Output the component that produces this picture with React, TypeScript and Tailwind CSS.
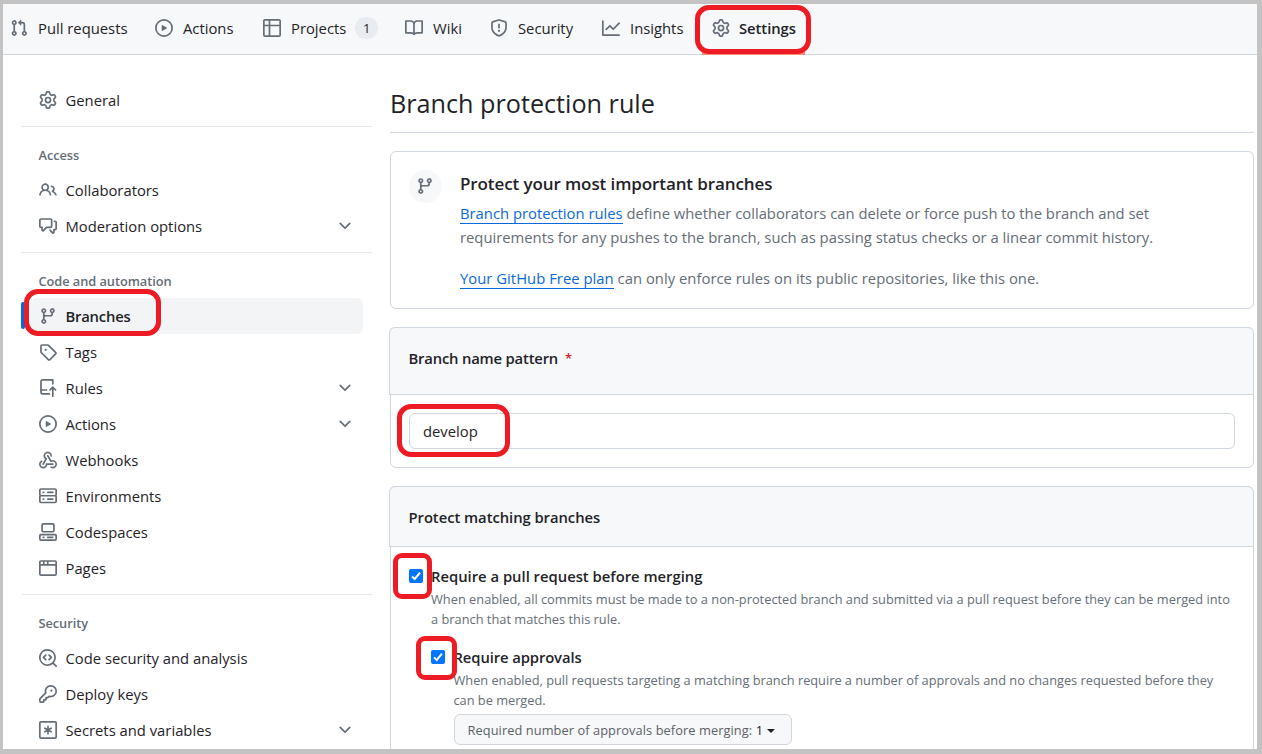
import type { ReactNode } from "react";

const ICONS = {
  pull: "M1.5 3.25a2.25 2.25 0 1 1 3 2.122v5.256a2.251 2.251 0 1 1-1.5 0V5.372A2.25 2.25 0 0 1 1.5 3.25Zm5.677-.177L9.573.677A.25.25 0 0 1 10 .854V2.5h1A2.5 2.5 0 0 1 13.5 5v5.628a2.251 2.251 0 1 1-1.5 0V5a1 1 0 0 0-1-1h-1v1.646a.25.25 0 0 1-.427.177L7.177 3.427a.25.25 0 0 1 0-.354ZM3.75 2.5a.75.75 0 1 0 0 1.5.75.75 0 0 0 0-1.5Zm0 9.5a.75.75 0 1 0 0 1.5.75.75 0 0 0 0-1.5Zm8.25.75a.75.75 0 1 0 1.5 0 .75.75 0 0 0-1.5 0Z",
  play: "M8 0a8 8 0 1 1 0 16A8 8 0 0 1 8 0ZM1.5 8a6.5 6.5 0 1 0 13 0 6.5 6.5 0 0 0-13 0Zm4.879-2.773 4.264 2.559a.25.25 0 0 1 0 .428l-4.264 2.559A.25.25 0 0 1 6 10.559V5.442a.25.25 0 0 1 .379-.215Z",
  table: "M0 1.75C0 .784.784 0 1.75 0h12.5C15.216 0 16 .784 16 1.75v12.5A1.75 1.75 0 0 1 14.25 16H1.75A1.75 1.75 0 0 1 0 14.25ZM6.5 6.5v8h7.75a.25.25 0 0 0 .25-.25V6.5Zm8-1.5V1.75a.25.25 0 0 0-.25-.25H6.5V5Zm-13 1.5v7.75c0 .138.112.25.25.25H5v-8ZM5 5V1.5H1.75a.25.25 0 0 0-.25.25V5Z",
  book: "M0 1.75A.75.75 0 0 1 .75 1h4.253c1.227 0 2.317.59 3 1.501A3.743 3.743 0 0 1 11.006 1h4.245a.75.75 0 0 1 .75.75v10.5a.75.75 0 0 1-.75.75h-4.507a2.25 2.25 0 0 0-1.591.659l-.622.621a.75.75 0 0 1-1.06 0l-.622-.621A2.25 2.25 0 0 0 5.258 13H.75a.75.75 0 0 1-.75-.75Zm7.251 10.324.004-5.073-.002-2.253A2.25 2.25 0 0 0 5.003 2.5H1.5v9h3.757a3.75 3.75 0 0 1 1.994.574ZM8.755 4.75l-.004 7.322a3.752 3.752 0 0 1 1.992-.572H14.5v-9h-3.495a2.25 2.25 0 0 0-2.25 2.25Z",
  shield: "M7.467.133a1.748 1.748 0 0 1 1.066 0l5.25 1.68A1.75 1.75 0 0 1 15 3.48V7c0 1.566-.32 3.182-1.303 4.682-.983 1.498-2.585 2.813-5.032 3.855a1.697 1.697 0 0 1-1.33 0c-2.447-1.042-4.049-2.357-5.032-3.855C1.32 10.182 1 8.566 1 7V3.48a1.75 1.75 0 0 1 1.217-1.667Zm.61 1.429a.25.25 0 0 0-.153 0l-5.25 1.68a.25.25 0 0 0-.174.238V7c0 1.358.275 2.666 1.057 3.86.784 1.194 2.121 2.34 4.366 3.297a.196.196 0 0 0 .154 0c2.245-.956 3.582-2.104 4.366-3.298C13.225 9.666 13.5 8.36 13.5 7V3.48a.251.251 0 0 0-.174-.237l-5.25-1.68ZM8.75 4.75v3a.75.75 0 0 1-1.5 0v-3a.75.75 0 0 1 1.5 0ZM9 10.5a1 1 0 1 1-2 0 1 1 0 0 1 2 0Z",
  graph: "M1.5 1.75V13.5h13.75a.75.75 0 0 1 0 1.5H.75a.75.75 0 0 1-.75-.75V1.75a.75.75 0 0 1 1.5 0Zm14.28 2.53-5.25 5.25a.75.75 0 0 1-1.06 0L7 7.06 4.28 9.78a.751.751 0 0 1-1.042-.018.751.751 0 0 1-.018-1.042l3.25-3.25a.75.75 0 0 1 1.06 0L10 7.94l4.72-4.72a.751.751 0 0 1 1.042.018.751.751 0 0 1 .018 1.042Z",
  gear: "M8 0a8.2 8.2 0 0 1 .701.031C9.444.095 9.99.645 10.16 1.29l.288 1.107c.018.066.079.158.212.224.231.114.454.243.668.386.123.082.233.09.299.071l1.103-.303c.644-.176 1.392.021 1.82.63.27.385.506.792.704 1.218.315.675.111 1.422-.364 1.891l-.814.806c-.049.048-.098.147-.088.294.016.257.016.515 0 .772-.01.147.038.246.088.294l.814.806c.475.469.679 1.216.364 1.891a7.977 7.977 0 0 1-.704 1.217c-.428.61-1.176.807-1.82.63l-1.102-.302c-.067-.019-.177-.011-.3.071a5.909 5.909 0 0 1-.668.386c-.133.066-.194.158-.211.224l-.29 1.106c-.168.646-.715 1.196-1.458 1.26a8.006 8.006 0 0 1-1.402 0c-.743-.064-1.289-.614-1.458-1.26l-.289-1.106c-.018-.066-.079-.158-.212-.224a5.738 5.738 0 0 1-.668-.386c-.123-.082-.233-.09-.299-.071l-1.103.303c-.644.176-1.392-.021-1.82-.63a8.12 8.12 0 0 1-.704-1.218c-.315-.675-.111-1.422.363-1.891l.815-.806c.05-.048.098-.147.088-.294a6.214 6.214 0 0 1 0-.772c.01-.147-.038-.246-.088-.294l-.815-.806C.635 6.045.431 5.298.746 4.623a7.92 7.92 0 0 1 .704-1.217c.428-.61 1.176-.807 1.82-.63l1.102.302c.067.019.177.011.3-.071.214-.143.437-.272.668-.386.133-.066.194-.158.211-.224l.29-1.106C6.009.645 6.556.095 7.299.03 7.53.01 7.764 0 8 0Zm-.571 1.525c-.036.003-.108.036-.137.146l-.289 1.105c-.147.561-.549.967-.998 1.189-.173.086-.34.183-.5.29-.417.278-.97.423-1.529.27l-1.103-.303c-.109-.03-.175.016-.195.045-.22.312-.412.644-.573.99-.014.031-.021.11.059.19l.815.806c.411.406.562.957.53 1.456a4.709 4.709 0 0 0 0 .582c.032.499-.119 1.05-.53 1.456l-.815.806c-.081.08-.073.159-.059.19.162.346.353.677.573.989.02.03.085.076.195.046l1.102-.303c.56-.153 1.113-.008 1.53.27.161.107.328.204.501.29.447.222.85.629.997 1.189l.289 1.105c.029.109.101.143.137.146a6.6 6.6 0 0 0 1.142 0c.036-.003.108-.036.137-.146l.289-1.105c.147-.561.549-.967.998-1.189.173-.086.34-.183.5-.29.417-.278.97-.423 1.529-.27l1.103.303c.109.029.175-.016.195-.045.22-.313.411-.644.573-.99.014-.031.021-.11-.059-.19l-.815-.806c-.411-.406-.562-.957-.53-1.456a4.709 4.709 0 0 0 0-.582c-.032-.499.119-1.05.53-1.456l.815-.806c.081-.08.073-.159.059-.19a6.464 6.464 0 0 0-.573-.989c-.02-.03-.085-.076-.195-.046l-1.102.303c-.56.153-1.113.008-1.53-.27a4.44 4.44 0 0 0-.501-.29c-.447-.222-.85-.629-.997-1.189l-.289-1.105c-.029-.11-.101-.143-.137-.146a6.6 6.6 0 0 0-1.142 0ZM11 8a3 3 0 1 1-6 0 3 3 0 0 1 6 0ZM9.5 8a1.5 1.5 0 1 0-3.001.001A1.5 1.5 0 0 0 9.5 8Z",
  people: "M2 5.5a3.5 3.5 0 1 1 5.898 2.549 5.508 5.508 0 0 1 3.034 4.084.75.75 0 1 1-1.482.235 4 4 0 0 0-7.9 0 .75.75 0 0 1-1.482-.236A5.507 5.507 0 0 1 3.102 8.05 3.493 3.493 0 0 1 2 5.5ZM11 4a3.001 3.001 0 0 1 2.22 5.018 5.01 5.01 0 0 1 2.56 3.012.749.749 0 0 1-.885.954.752.752 0 0 1-.549-.514 3.507 3.507 0 0 0-2.522-2.372.75.75 0 0 1-.574-.73v-.352a.75.75 0 0 1 .416-.672A1.5 1.5 0 0 0 11 5.5.75.75 0 0 1 11 4Zm-5.5-.5a2 2 0 1 0-.001 3.999A2 2 0 0 0 5.5 3.5Z",
  discussion: "M1.75 1h8.5c.966 0 1.75.784 1.75 1.75v5.5A1.75 1.75 0 0 1 10.25 10H7.061l-2.574 2.573A1.458 1.458 0 0 1 2 11.543V10h-.25A1.75 1.75 0 0 1 0 8.25v-5.5C0 1.784.784 1 1.75 1ZM1.5 2.75v5.5c0 .138.112.25.25.25h1a.75.75 0 0 1 .75.75v2.19l2.72-2.72a.749.749 0 0 1 .53-.22h3.5a.25.25 0 0 0 .25-.25v-5.5a.25.25 0 0 0-.25-.25h-8.5a.25.25 0 0 0-.25.25Zm13 2a.25.25 0 0 0-.25-.25h-.5a.75.75 0 0 1 0-1.5h.5c.966 0 1.75.784 1.75 1.75v5.5A1.75 1.75 0 0 1 14.25 12H14v1.543a1.458 1.458 0 0 1-2.487 1.03L9.22 12.28a.749.749 0 0 1 .326-1.275.749.749 0 0 1 .734.215l2.22 2.22v-2.19a.75.75 0 0 1 .75-.75h1a.25.25 0 0 0 .25-.25Z",
  branch: "M9.5 3.25a2.25 2.25 0 1 1 3 2.122V6A2.5 2.5 0 0 1 10 8.5H6a1 1 0 0 0-1 1v1.128a2.251 2.251 0 1 1-1.5 0V5.372a2.25 2.25 0 1 1 1.5 0v1.836A2.493 2.493 0 0 1 6 7h4a1 1 0 0 0 1-1v-.628A2.25 2.25 0 0 1 9.5 3.25Zm-6 0a.75.75 0 1 0 1.5 0 .75.75 0 0 0-1.5 0Zm8.25-.75a.75.75 0 1 0 0 1.5.75.75 0 0 0 0-1.5ZM4.25 12a.75.75 0 1 0 0 1.5.75.75 0 0 0 0-1.5Z",
  tag: "M1 7.775V2.75C1 1.784 1.784 1 2.75 1h5.025c.464 0 .91.184 1.238.513l6.25 6.25a1.75 1.75 0 0 1 0 2.474l-5.026 5.026a1.75 1.75 0 0 1-2.474 0l-6.25-6.25A1.752 1.752 0 0 1 1 7.775Zm1.5 0c0 .066.026.13.073.177l6.25 6.25a.25.25 0 0 0 .354 0l5.025-5.025a.25.25 0 0 0 0-.354l-6.25-6.25a.25.25 0 0 0-.177-.073H2.75a.25.25 0 0 0-.25.25ZM6 5a1 1 0 1 1 0 2 1 1 0 0 1 0-2Z",
  push: "M1 2.5A2.5 2.5 0 0 1 3.5 0h8.75a.75.75 0 0 1 .75.75v3.5a.75.75 0 0 1-1.5 0V1.5h-8a1 1 0 0 0-1 1v6.708A2.493 2.493 0 0 1 3.5 9h3.25a.75.75 0 0 1 0 1.5H3.5a1 1 0 0 0 0 2h5.75a.75.75 0 0 1 0 1.5H3.5A2.5 2.5 0 0 1 1 11.5Zm13.23 7.79h-.001l-1.224-1.224v6.184a.75.75 0 0 1-1.5 0V9.066L10.28 10.29a.75.75 0 0 1-1.06-1.061l2.505-2.504a.75.75 0 0 1 1.06 0L15.29 9.23a.751.751 0 0 1-.018 1.042.751.751 0 0 1-1.042.018Z",
  webhook: "M5.5 4.25a2.25 2.25 0 0 1 4.5 0 .75.75 0 0 0 1.5 0 3.75 3.75 0 1 0-6.14 2.889l-2.272 4.258a.75.75 0 0 0 1.324.706L7 7.25a.75.75 0 0 0-.309-1.015A2.25 2.25 0 0 1 5.5 4.25Z M7.364 3.607a.75.75 0 0 1 1.03.257l2.608 4.349a3.75 3.75 0 1 1-.628 6.785.75.75 0 0 1 .752-1.299 2.25 2.25 0 1 0-.033-3.88.75.75 0 0 1-1.03-.256L7.107 4.636a.75.75 0 0 1 .257-1.03Z M2.9 8.776A.75.75 0 0 1 2.625 9.8 2.25 2.25 0 1 0 6 11.75a.75.75 0 0 1 .75-.751h5.5a.75.75 0 0 1 0 1.5H7.425a3.75 3.75 0 1 1-5.55-3.998.75.75 0 0 1 1.024.274Z",
  server: "M1.75 1h12.5c.966 0 1.75.784 1.75 1.75v4c0 .372-.116.717-.314 1 .198.283.314.628.314 1v4a1.75 1.75 0 0 1-1.75 1.75H1.75A1.75 1.75 0 0 1 0 12.75v-4c0-.358.109-.707.314-1a1.739 1.739 0 0 1-.314-1v-4C0 1.784.784 1 1.75 1ZM1.5 2.75v4c0 .138.112.25.25.25h12.5a.25.25 0 0 0 .25-.25v-4a.25.25 0 0 0-.25-.25H1.75a.25.25 0 0 0-.25.25Zm.25 5.75a.25.25 0 0 0-.25.25v4c0 .138.112.25.25.25h12.5a.25.25 0 0 0 .25-.25v-4a.25.25 0 0 0-.25-.25ZM7 4.75A.75.75 0 0 1 7.75 4h4.5a.75.75 0 0 1 0 1.5h-4.5A.75.75 0 0 1 7 4.75ZM7.75 10h4.5a.75.75 0 0 1 0 1.5h-4.5a.75.75 0 0 1 0-1.5ZM3 4.75A.75.75 0 0 1 3.75 4h.5a.75.75 0 0 1 0 1.5h-.5A.75.75 0 0 1 3 4.75ZM3.75 10h.5a.75.75 0 0 1 0 1.5h-.5a.75.75 0 0 1 0-1.5Z",
  codespaces: "M0 11.25c0-.966.784-1.75 1.75-1.75h12.5c.966 0 1.75.784 1.75 1.75v3A1.75 1.75 0 0 1 14.25 16H1.75A1.75 1.75 0 0 1 0 14.25Zm2-9.5C2 .784 2.784 0 3.75 0h8.5C13.216 0 14 .784 14 1.75v5a1.75 1.75 0 0 1-1.75 1.75h-8.5A1.75 1.75 0 0 1 2 6.75Zm1.75-.25a.25.25 0 0 0-.25.25v5c0 .138.112.25.25.25h8.5a.25.25 0 0 0 .25-.25v-5a.25.25 0 0 0-.25-.25Zm-2 9.5a.25.25 0 0 0-.25.25v3c0 .138.112.25.25.25h12.5a.25.25 0 0 0 .25-.25v-3a.25.25 0 0 0-.25-.25Z M7 12.75a.75.75 0 0 1 .75-.75h4.5a.75.75 0 0 1 0 1.5h-4.5a.75.75 0 0 1-.75-.75Zm-4 0a.75.75 0 0 1 .75-.75h.5a.75.75 0 0 1 0 1.5h-.5a.75.75 0 0 1-.75-.75Z",
  browser: "M0 2.75C0 1.784.784 1 1.75 1h12.5c.966 0 1.75.784 1.75 1.75v10.5A1.75 1.75 0 0 1 14.25 15H1.75A1.75 1.75 0 0 1 0 13.25ZM14.5 6h-13v7.25c0 .138.112.25.25.25h12.5a.25.25 0 0 0 .25-.25Zm-6-3.5v2h6V2.75a.25.25 0 0 0-.25-.25ZM5 2.5v2h2v-2Zm-3.25 0a.25.25 0 0 0-.25.25V4.5h2v-2Z",
  codescan: "M8.47 4.97a.75.75 0 0 0 0 1.06L9.94 7.5 8.47 8.97a.75.75 0 1 0 1.06 1.06l2-2a.75.75 0 0 0 0-1.06l-2-2a.75.75 0 0 0-1.06 0ZM6.53 6.03a.75.75 0 0 0-1.06-1.06l-2 2a.75.75 0 0 0 0 1.06l2 2a.75.75 0 1 0 1.06-1.06L5.06 7.5l1.47-1.47Z M12.246 13.307a7.501 7.501 0 1 1 1.06-1.06l2.474 2.473a.749.749 0 0 1-.326 1.275.749.749 0 0 1-.734-.215ZM1.5 7.5a6.002 6.002 0 0 0 3.608 5.504 6.002 6.002 0 0 0 6.486-1.117.748.748 0 0 1 .292-.293A6 6 0 1 0 1.5 7.5Z",
  key: "M10.5 0a5.499 5.499 0 1 1-1.288 10.848l-.932.932a.749.749 0 0 1-.53.22H7v.75a.749.749 0 0 1-.22.53l-.5.5a.749.749 0 0 1-.53.22H5v.75a.749.749 0 0 1-.22.53l-.5.5a.749.749 0 0 1-.53.22h-2A1.75 1.75 0 0 1 0 14.25v-2c0-.199.079-.389.22-.53l4.932-4.932A5.5 5.5 0 0 1 10.5 0Zm-4 5.5c-.001.431.069.86.205 1.269a.75.75 0 0 1-.181.768L1.5 12.56v1.69c0 .138.112.25.25.25h1.69l.06-.06v-1.19a.75.75 0 0 1 .75-.75h1.19l.06-.06v-1.19a.75.75 0 0 1 .75-.75h1.19l1.023-1.025a.75.75 0 0 1 .768-.18A4 4 0 1 0 6.5 5.5ZM11 6a1 1 0 1 1 0-2 1 1 0 0 1 0 2Z",
  asterisk: "M0 1.75C0 .784.784 0 1.75 0h12.5C15.216 0 16 .784 16 1.75v12.5A1.75 1.75 0 0 1 14.25 16H1.75A1.75 1.75 0 0 1 0 14.25ZM1.75 1.5a.25.25 0 0 0-.25.25v12.5c0 .138.112.25.25.25h12.5a.25.25 0 0 0 .25-.25V1.75a.25.25 0 0 0-.25-.25ZM8 4a.75.75 0 0 1 .75.75V6.7l1.69-.975a.75.75 0 0 1 .75 1.3L9.5 8l1.69.975a.75.75 0 0 1-.75 1.3L8.75 9.3v1.95a.75.75 0 0 1-1.5 0V9.3l-1.69.975a.75.75 0 0 1-.75-1.3L6.5 8l-1.69-.975a.75.75 0 0 1 .75-1.3L7.25 6.7V4.75A.75.75 0 0 1 8 4Z",
  chevron: "M12.78 5.22a.749.749 0 0 1 0 1.06l-4.25 4.25a.749.749 0 0 1-1.06 0L3.22 6.28a.749.749 0 1 1 1.06-1.06L8 8.939l3.72-3.719a.749.749 0 0 1 1.06 0Z",
};

type IconName = keyof typeof ICONS;

function Icon({ name }: { name: IconName }) {
  return (
    <svg viewBox="0 0 16 16" className="h-[18px] w-[18px] shrink-0 fill-[#656d76]">
      <path fillRule="evenodd" d={ICONS[name]} />
    </svg>
  );
}

function Tab({ icon, label, width, bold, count }: { icon: IconName; label: string; width: string; bold?: boolean; count?: string }) {
  return (
    <div className={`flex h-full shrink-0 items-center gap-[10px] ${width}`}>
      <Icon name={icon} />
      <span className={bold ? "-ml-px font-semibold tracking-[-0.05px]" : ""}>{label}</span>
      {count && (
        <span className="-ml-px flex h-[22px] w-[23px] items-center justify-center rounded-full bg-[#e8ebef] text-[13px] font-medium">{count}</span>
      )}
    </div>
  );
}

function Row({ icon, label, chevron, active }: { icon: IconName; label: string; chevron?: boolean; active?: boolean }) {
  return (
    <div
      className={`relative ml-[9px] mr-[9px] flex h-9 items-center gap-[9px] rounded-md pl-[9px] pr-[9px] ${active ? "bg-[#f3f4f6]" : ""}`}
    >
      {active && <span className="absolute left-[-9px] top-1 h-[27px] w-[4px] rounded-md bg-[#0969da]" />}
      <Icon name={icon} />
      <span className={`-ml-[0.5px] flex-1 ${active ? "font-semibold tracking-[-0.2px]" : ""}`}>{label}</span>
      {chevron && <Icon name="chevron" />}
    </div>
  );
}

function Group({ title, children }: { title: string; children: ReactNode }) {
  return (
    <section>
      <div className="mt-2 h-px bg-[#e6e9ec]" />
      <h2 className="flex h-[45px] items-center pl-[17.5px] pt-[10px] text-[12.8px] font-semibold tracking-[-0.05px] text-[#656d76]">{title}</h2>
      {children}
    </section>
  );
}

function Check() {
  return (
    <span className="mt-[1px] flex h-[14px] w-[14px] shrink-0 items-center justify-center rounded-[2px] bg-[#0075ff]">
      <svg viewBox="0 0 14 14" className="h-[14px] w-[14px] fill-none stroke-white stroke-2">
        <path d="M3 7.4 5.7 10 11 3.6" />
      </svg>
    </span>
  );
}

function Mark({ box }: { box: string }) {
  return <div className={`absolute border-[5px] border-[#ed1c24] ${box}`} />;
}

export default function App() {
  return (
    <div className="relative flex h-[754px] w-[1262px] flex-col overflow-hidden whitespace-nowrap border-b-[5px] border-l-[3px] border-r-[5px] border-t-[4px] border-[#c3c3c3] bg-white font-['Open_Sans','Noto_Sans',sans-serif] text-[14.8px] leading-6 text-[#1f2328]">
      <nav className="flex h-[51px] shrink-0 items-center border-b border-[#d0d7de] bg-[#f6f8fa] pb-[2px] pl-[7px]">
        <Tab icon="pull" label="Pull requests" width="w-[145px]" />
        <Tab icon="play" label="Actions" width="w-[108px]" />
        <Tab icon="table" label="Projects" width="w-[142px]" count="1" />
        <Tab icon="book" label="Wiki" width="w-[85px]" />
        <Tab icon="shield" label="Security" width="w-[112px]" />
        <Tab icon="graph" label="Insights" width="w-[110px]" />
        <Tab icon="gear" label="Settings" width="w-[90px]" bold />
      </nav>
      <div className="flex min-h-0 flex-1">
        <aside className="ml-[18px] w-[351px] shrink-0 pt-[27px]">
          <Row icon="gear" label="General" />
          <Group title="Access">
            <Row icon="people" label="Collaborators" />
            <Row icon="discussion" label="Moderation options" chevron />
          </Group>
          <Group title="Code and automation">
            <Row icon="branch" label="Branches" active />
            <Row icon="tag" label="Tags" />
            <Row icon="push" label="Rules" chevron />
            <Row icon="play" label="Actions" chevron />
            <Row icon="webhook" label="Webhooks" />
            <Row icon="server" label="Environments" />
            <Row icon="codespaces" label="Codespaces" />
            <Row icon="browser" label="Pages" />
          </Group>
          <Group title="Security">
            <Row icon="codescan" label="Code security and analysis" />
            <Row icon="key" label="Deploy keys" />
            <Row icon="asterisk" label="Secrets and variables" chevron />
          </Group>
        </aside>
        <main className="ml-[18px] w-[864px] shrink-0 pt-[27px]">
          <h1 className="h-[51px] border-b border-[#d0d7de] pt-px text-[25.2px] leading-[40px]">Branch protection rule</h1>
          <section className="mt-[18px] flex h-[158px] rounded-md border border-[#d0d7de] pl-[18px] pt-[18px]">
            <div className="flex h-[33px] w-[33px] shrink-0 items-center justify-center rounded-full bg-[#f6f8fa] pb-[2px] pr-px">
              <Icon name="branch" />
            </div>
            <div className="ml-[18px] text-[#656d76]">
              <h3 className="text-[17px] font-semibold leading-7 tracking-[-0.1px] text-[#1f2328]">Protect your most important branches</h3>
              <p className="mt-[3px]">
                <a className="border-b border-[#0969da] text-[#0969da]">Branch protection rules</a> define whether collaborators can delete or force push to the branch and set
                <br />
                requirements for any pushes to the branch, such as passing status checks or a linear commit history.
              </p>
              <p className="mt-[17px] tracking-[0.03px]">
                <a className="border-b border-[#0969da] text-[#0969da]">Your GitHub Free plan</a> can only enforce rules on its public repositories, like this one.
              </p>
            </div>
          </section>
          <section className="mt-[18px] h-[141px] rounded-md border border-[#d0d7de]">
            <div className="-ml-[2px] -mt-px flex h-[68px] items-center rounded-t-md border border-r-0 border-[#d0d7de] bg-[#f6f8fa] pb-[6px] pl-[18.5px] font-semibold tracking-[-0.18px]">
              Branch name pattern <span className="ml-[7px] text-[13px] text-[#d1242f]">*</span>
            </div>
            <div className="ml-[18px] mt-[18px] flex h-9 w-[826px] items-center rounded-md border border-[#d0d7de] pl-[13px]">develop</div>
          </section>
          <section className="mt-[18px] h-[300px] rounded-md border border-[#d0d7de]">
            <div className="-ml-[2px] -mt-px flex h-[61px] items-center rounded-t-md border border-r-0 border-[#d0d7de] bg-[#f6f8fa] pl-[18.5px] font-semibold tracking-[-0.05px]">
              Protect matching branches
            </div>
            <div className="flex gap-[9px] pl-[17.5px] pt-[21px]">
              <Check />
              <div className="-ml-[0.5px] -mt-[4px]">
                <div className="font-semibold leading-6">Require a pull request before merging</div>
                <p className="mt-px text-[12.8px] leading-5 tracking-[0.01px] text-[#656d76]">
                  When enabled, all commits must be made to a non-protected branch and submitted via a pull request before they can be merged into
                  <br />a branch that matches this rule.
                </p>
                <div className="mt-[20px] flex gap-[9px]">
                  <Check />
                  <div className="-ml-[0.5px] -mt-[4px]">
                    <div className="font-semibold leading-6 tracking-[-0.1px]">Require approvals</div>
                    <p className="mt-px text-[12.8px] leading-5 tracking-[-0.015px] text-[#656d76]">
                      When enabled, pull requests targeting a matching branch require a number of approvals and no changes requested before they
                      <br />
                      can be merged.
                    </p>
                    <div className="mt-[4px] flex h-[31px] w-[338px] items-center rounded-md border border-[#d3d6da] bg-[#f6f8fa] pl-[13px] text-[12.8px] font-medium tracking-[0.08px] text-[#5c6166]">
                      Required number of approvals before merging:&nbsp;<span className="text-[#1f2328]">1</span>
                      <span className="ml-[4px] mt-[2px] border-x-4 border-t-4 border-x-transparent border-t-[#1f2328]" />
                    </div>
                  </div>
                </div>
              </div>
            </div>
          </section>
        </main>
      </div>
      <span className="absolute left-[699px] top-[48px] h-[3px] w-[103px] bg-[#fd8c73]" />
      <Mark box="left-[692px] top-[1px] h-[49px] w-[116px] rounded-[14px]" />
      <Mark box="left-[21px] top-[285px] h-[47px] w-[137px] rounded-[14px]" />
      <Mark box="left-[394px] top-[400px] h-[53px] w-[113px] rounded-[14px]" />
      <Mark box="left-[390px] top-[549px] h-[46px] w-[39px] rounded-[9px]" />
      <Mark box="left-[413px] top-[632px] h-[44px] w-[41px] rounded-[9px]" />
    </div>
  );
}
